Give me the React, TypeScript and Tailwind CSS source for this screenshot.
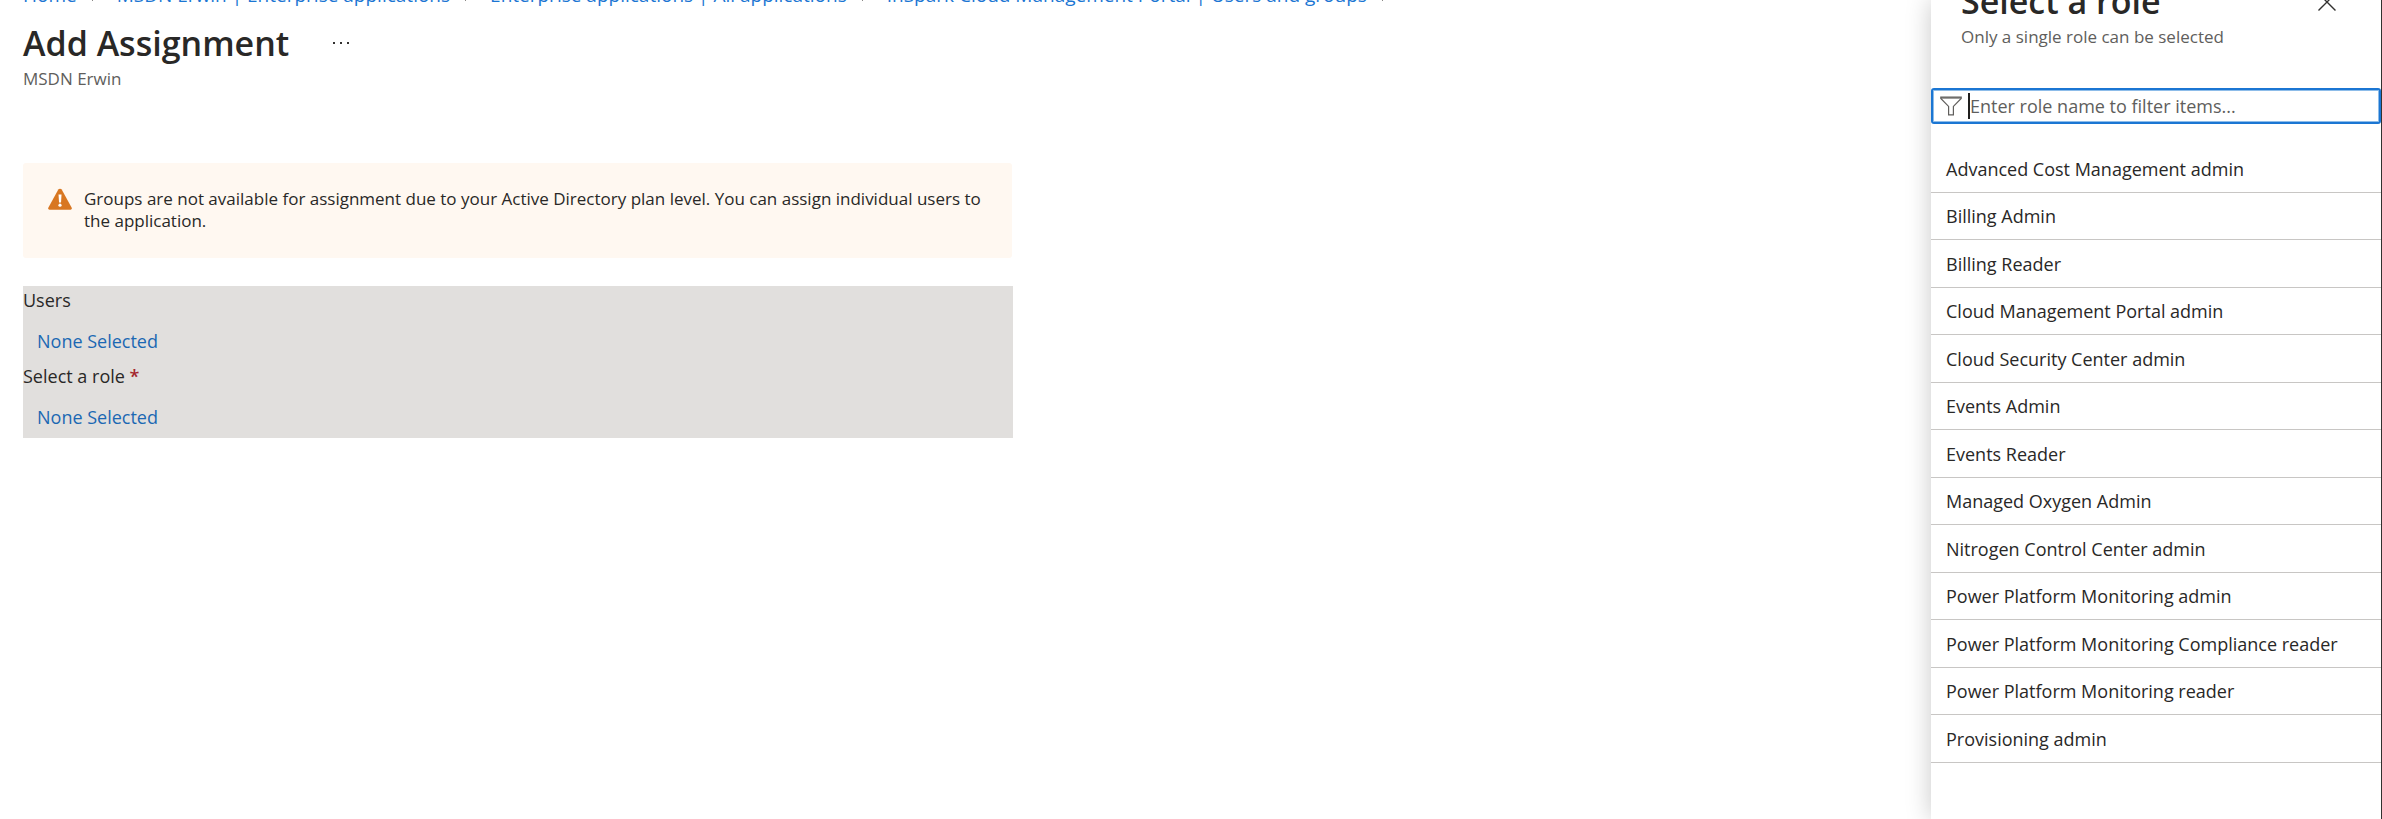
import { useState } from 'react';

const breadcrumbs = [
  'Home',
  'MSDN Erwin | Enterprise applications',
  'Enterprise applications | All applications',
  'InSpark Cloud Management Portal | Users and groups',
];

const roles = [
  'Advanced Cost Management admin',
  'Billing Admin',
  'Billing Reader',
  'Cloud Management Portal admin',
  'Cloud Security Center admin',
  'Events Admin',
  'Events Reader',
  'Managed Oxygen Admin',
  'Nitrogen Control Center admin',
  'Power Platform Monitoring admin',
  'Power Platform Monitoring Compliance reader',
  'Power Platform Monitoring reader',
  'Provisioning admin',
];

function ChevronIcon() {
  return (
    <svg viewBox="0 0 8 14" className="w-2 h-3.5 shrink-0" fill="none" stroke="#8a8886" strokeWidth="1">
      <path d="M1 1l6 6-6 6" />
    </svg>
  );
}

function WarningIcon() {
  return (
    <svg viewBox="0 0 24 22" className="w-6 h-[22px] shrink-0">
      <path
        d="M10.3 1.6a2 2 0 0 1 3.4 0l10 18.2a1.4 1.4 0 0 1-1.2 2H1.5a1.4 1.4 0 0 1-1.2-2z"
        fill="#d87722"
      />
      <path d="M10.5 6.5h3l-.5 8h-2z" fill="#fff" />
      <circle cx="12" cy="17.2" r="1.6" fill="#fff" />
    </svg>
  );
}

function FilterIcon() {
  return (
    <svg viewBox="0 0 22 20" className="w-[22px] h-5 shrink-0" fill="none" stroke="#605e5c" strokeWidth="1.2">
      <path d="M.8 1.2h20.4v1.2l-7.8 8v8.4H8.6v-8.4L.8 2.4z" />
      <path d="M1 2h20" />
    </svg>
  );
}

function CloseIcon() {
  return (
    <svg viewBox="0 0 18 18" className="w-[18px] h-[18px]" fill="none" stroke="#323130" strokeWidth="1.4">
      <path d="M.5.5l17 17M17.5.5l-17 17" />
    </svg>
  );
}

function RolePanel() {
  const [filter, setFilter] = useState('');
  const visible = roles.filter((role) => role.toLowerCase().includes(filter.toLowerCase()));

  return (
    <aside className="w-[451px] shrink-0 bg-white border-r border-[#323130] shadow-[0_0_24px_rgba(0,0,0,0.22)]">
      <header className="-mt-[23px] h-[111px] pl-[30px] pr-[45px]">
        <div className="flex items-center justify-between h-12">
          <h2 className="text-[34px] leading-[48px] font-semibold">Select a role</h2>
          <button type="button" aria-label="Close" className="pt-0.5">
            <CloseIcon />
          </button>
        </div>
        <p className="text-[17px] leading-6 text-[#605e5c]">Only a single role can be selected</p>
      </header>

      <label className="flex items-center h-9 pl-[7px] border-2 border-[#1b76d3] rounded-[3px] ring-1 ring-inset ring-[#8dbce9]">
        <FilterIcon />
        <span className="ml-[6px] w-0.5 h-[26px] bg-[#201f1e]" />
        <input
          type="text"
          aria-label="Filter roles"
          value={filter}
          onChange={(e) => setFilter(e.target.value)}
          placeholder="Enter role name to filter items..."
          className="flex-1 min-w-0 text-[18px] leading-6 bg-transparent outline-none placeholder:text-[#605e5c]"
        />
      </label>

      <ul className="mt-[21px]">
        {visible.map((role) => (
          <li key={role} className="h-12 even:h-[47px] border-b border-[#c8c6c4]">
            <button type="button" className="w-full h-full pl-[15px] text-left text-[18px] leading-6 whitespace-nowrap">
              {role}
            </button>
          </li>
        ))}
      </ul>
    </aside>
  );
}

export default function App() {
  return (
    <div className="flex h-screen overflow-hidden bg-white text-[#292827] font-['Open_Sans',sans-serif]">
      <main className="flex-1 min-w-0 pl-[23px]">
        <nav aria-label="Breadcrumb" className="-mt-[19px] h-7 flex items-center text-[19px] leading-7 text-[#1b76d3] whitespace-nowrap">
          {breadcrumbs.map((crumb) => (
            <span key={crumb} className="flex items-center gap-[14px] mr-[18px]">
              <a href="#">{crumb}</a>
              <ChevronIcon />
            </span>
          ))}
        </nav>

        <header className="pt-[10px]">
          <div className="flex items-center gap-11 h-12">
            <h1 className="text-[34px] leading-[48px] font-semibold">Add Assignment</h1>
            <button type="button" aria-label="More options" className="flex gap-[5px]">
              <span className="w-0.5 h-0.5 bg-[#323130]" />
              <span className="w-0.5 h-0.5 bg-[#323130]" />
              <span className="w-0.5 h-0.5 bg-[#323130]" />
            </button>
          </div>
          <p className="text-[17px] leading-6 text-[#605e5c]">MSDN Erwin</p>
        </header>

        <div role="alert" className="mt-[72px] max-w-[989px] h-[95px] flex gap-3 pt-[25px] pl-[25px] pr-6 rounded-[3px] bg-[#fff8f1]">
          <WarningIcon />
          <p className="text-[17px] leading-[22px]">
            Groups are not available for assignment due to your Active Directory plan level. You can assign individual
            users to the application.
          </p>
        </div>

        <section className="mt-7 max-w-[990px] bg-[#e1dfdd] text-[18px] leading-7 pb-[7px]">
          <p>Users</p>
          <div className="pt-[13px] pb-[7px] pl-[14px]">
            <a href="#" className="text-[#1b68b3]">None Selected</a>
          </div>
          <p>
            Select a role <span className="font-semibold text-[#a4262c]">*</span>
          </p>
          <div className="pt-[13px] pl-[14px]">
            <a href="#" className="text-[#1b68b3]">None Selected</a>
          </div>
        </section>
      </main>

      <RolePanel />
    </div>
  );
}
